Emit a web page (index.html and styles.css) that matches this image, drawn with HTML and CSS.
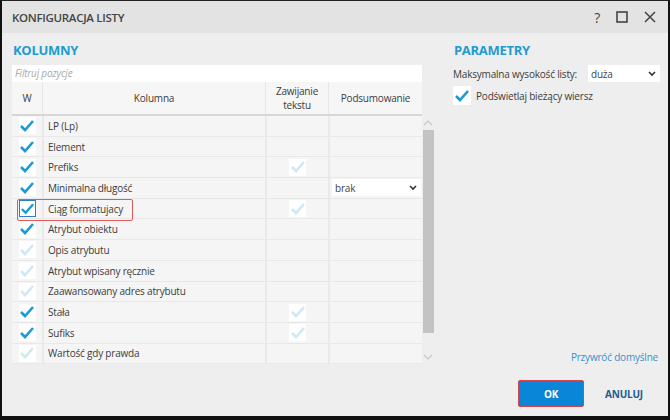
FILE: index.html
```html
<!DOCTYPE html>
<html lang="pl">
<head>
    <meta charset="UTF-8">
    <title>Konfiguracja listy</title>
    <link rel="stylesheet" href="styles.css">
</head>
<body>
    <div class="dialog">
        <div class="titlebar">
            <div class="title">KONFIGURACJA LISTY</div>
            <div class="win-icons">
                <span class="qmark">?</span>
                <svg width="12" height="12" viewBox="0 0 12 12"><rect x="1" y="1" width="10" height="10" fill="none" stroke="#444" stroke-width="1.6"/></svg>
                <svg width="12" height="12" viewBox="0 0 12 12"><path d="M1 1 L11 11 M11 1 L1 11" stroke="#444" stroke-width="1.5"/></svg>
            </div>
        </div>
        <div class="content">
            <div class="left">
                <div class="heading">KOLUMNY</div>
                <div class="filter">Filtruj pozycje</div>
                <div class="table">
                    <div class="thead">
                        <div class="th">W</div>
                        <div class="th">Kolumna</div>
                        <div class="th">Zawijanie<br>tekstu</div>
                        <div class="th">Podsumowanie</div>
                    </div>
                    <div class="tbody-wrap">
                        <div class="tbody" id="rows"></div>
                        <div class="scrollbar">
                            <svg class="arrow" width="10" height="6" viewBox="0 0 10 6"><path d="M1 5 L5 1 L9 5" fill="none" stroke="#c8c8c8" stroke-width="1.2"/></svg>
                            <div class="track"><div class="thumb"></div></div>
                            <svg class="arrow" width="10" height="6" viewBox="0 0 10 6"><path d="M1 1 L5 5 L9 1" fill="none" stroke="#c8c8c8" stroke-width="1.2"/></svg>
                        </div>
                    </div>
                </div>
            </div>
            <div class="right">
                <div class="heading">PARAMETRY</div>
                <div class="param">
                    <span class="label">Maksymalna wysokość listy:</span>
                    <div class="select wide">duża <svg width="8" height="6" viewBox="0 0 8 6"><path d="M1 1 L4 4 L7 1" fill="none" stroke="#333" stroke-width="1.6"/></svg></div>
                </div>
                <div class="param check-line">
                    <span class="box"><svg width="16" height="14" viewBox="0 0 16 14"><path d="M2 7 L6 11 L14 2" fill="none" stroke="#1b9ad6" stroke-width="2.6"/></svg></span>
                    <span>Podświetlaj bieżący wiersz</span>
                </div>
                <div class="spacer"></div>
                <div class="restore">Przywróć domyślne</div>
            </div>
        </div>
        <div class="footer">
            <div class="btn-ok">OK</div>
            <div class="btn-cancel">ANULUJ</div>
        </div>
    </div>

    <script>
        var data = [
            ["LP (Lp)", 1, null, ""],
            ["Element", 1, null, ""],
            ["Prefiks", 1, 0, ""],
            ["Minimalna długość", 1, null, "brak"],
            ["Ciąg formatujacy", 1, 0, ""],
            ["Atrybut obiektu", 1, null, ""],
            ["Opis atrybutu", 0, null, ""],
            ["Atrybut wpisany ręcznie", 0, null, ""],
            ["Zaawansowany adres atrybutu", 0, null, ""],
            ["Stała", 1, 0, ""],
            ["Sufiks", 1, 0, ""],
            ["Wartość gdy prawda", 0, null, ""]
        ];

        function tick(on) {
            var color = on ? "#1b9ad6" : "#cfe8f6";
            return '<span class="box"><svg width="16" height="14" viewBox="0 0 16 14"><path d="M2 7 L6 11 L14 2" fill="none" stroke="' + color + '" stroke-width="2.6"/></svg></span>';
        }

        var html = "";
        data.forEach(function (r, i) {
            var sel = i === 4 ? " selected" : "";
            html += '<div class="row' + sel + '">';
            html += '<div class="td c-w">' + tick(r[1]) + '</div>';
            html += '<div class="td c-name">' + r[0] + '</div>';
            html += '<div class="td c-wrap">' + (r[2] === null ? "" : tick(r[2])) + '</div>';
            html += '<div class="td c-sum">' + (r[3] ? '<div class="select">' + r[3] + ' <svg width="8" height="6" viewBox="0 0 8 6"><path d="M1 1 L4 4 L7 1" fill="none" stroke="#333" stroke-width="1.6"/></svg></div>' : "") + '</div>';
            html += '</div>';
        });
        document.getElementById('rows').innerHTML = html;
    </script>
</body>
</html>
```

FILE: styles.css
```css
* {
    box-sizing: border-box;
}
body {
    margin: 0;
    background: #111;
    font-family: "Open Sans", "Noto Sans", sans-serif;
    color: #3c3c3c;
    font-size: 10px;
    letter-spacing: -0.2px;
}
.dialog {
    width: 670px;
    height: 420px;
    border-top: 1px solid #222;
    border-left: 2px solid #111;
    border-right: 2px solid #111;
    border-bottom: 4px solid #111;
    background: #eeeeee;
    display: flex;
    flex-direction: column;
}
.titlebar {
    height: 32px;
    background: #e3e3e3;
    display: flex;
    align-items: center;
    justify-content: space-between;
    padding: 0 12px 0 10px;
}
.title {
    font-weight: 600;
    font-size: 11.5px;
    letter-spacing: -0.3px;
    color: #444;
}
.win-icons {
    display: flex;
    align-items: center;
    gap: 16px;
}
.qmark {
    font-size: 14px;
    color: #444;
}
.content {
    display: flex;
    padding: 8px 10px 0 10px;
    gap: 19px;
    flex: 1;
}
.heading {
    color: #1e9bd0;
    font-weight: 700;
    font-size: 13px;
    letter-spacing: -0.3px;
    height: 24px;
    padding-left: 1px;
}
.left {
    width: 422px;
    display: flex;
    flex-direction: column;
}
.filter {
    width: 410px;
    height: 17px;
    background: #fff;
    color: #aaa;
    font-style: italic;
    padding: 0 3px;
    line-height: 17px;
}
.table {
    width: 422px;
}
.thead {
    display: grid;
    grid-template-columns: 30px 223px 63px 94px;
    width: 410px;
    height: 34px;
    background: #f6f6f6;
    border-bottom: 2px solid #d6d6d6;
}
.th {
    display: flex;
    align-items: center;
    justify-content: center;
    text-align: center;
    line-height: 14px;
    border-left: 1px solid #e6e6e6;
}
.th:first-child {
    border-left: none;
}
.tbody-wrap {
    display: flex;
}
.tbody {
    width: 410px;
}
.row {
    display: grid;
    grid-template-columns: 30px 223px 63px 94px;
    height: 20.7px;
    background: #f5f5f5;
    border-bottom: 1px solid #e8e8e8;
    position: relative;
}
.td {
    display: flex;
    align-items: center;
    border-left: 2px solid #e9e9e9;
}
.td:first-child {
    border-left: none;
}
.c-w, .c-wrap {
    justify-content: center;
}
.c-name {
    padding-left: 4px;
}
.c-sum {
    padding: 0 1px 0 2px;
}
.box {
    width: 17px;
    height: 17px;
    background: #fff;
    display: flex;
    align-items: center;
    justify-content: center;
}
.row.selected {
    z-index: 2;
}
.row.selected .c-w .box {
    border: 1px solid #2a7fc5;
}
.row.selected::after {
    content: "";
    position: absolute;
    left: 5px;
    top: 0;
    width: 114px;
    height: 20px;
    border: 1.5px solid #e05a5a;
    border-radius: 2px;
}
.select {
    flex: 1;
    height: 17px;
    background: #fff;
    display: flex;
    align-items: center;
    justify-content: space-between;
    padding: 0 4px 0 3px;
    color: #444;
}
.scrollbar {
    width: 12px;
    display: flex;
    flex-direction: column;
    align-items: center;
}
.arrow {
    margin: 4px 0;
}
.track {
    flex: 1;
    width: 11px;
}
.thumb {
    width: 11px;
    height: 203px;
    background: #c3c3c3;
}
.right {
    flex: 1;
    display: flex;
    flex-direction: column;
}
.param {
    display: flex;
    align-items: center;
    gap: 11px;
    height: 17px;
    margin-bottom: 4px;
}
.label {
    white-space: nowrap;
    flex-shrink: 0;
}
.select.wide {
    flex: none;
    width: 72px;
}
.check-line {
    gap: 5px;
    height: 19px;
}
.check-line .box {
    width: 18px;
    height: 19px;
}
.spacer {
    flex: 1;
}
.restore {
    color: #3f8fc8;
    text-align: right;
    padding-right: 2px;
    margin-bottom: 4px;
}
.footer {
    height: 48px;
    display: flex;
    justify-content: flex-end;
    align-items: flex-start;
    padding: 12px 25px 0 0;
    gap: 21px;
}
.btn-ok {
    width: 66px;
    height: 27px;
    background: #0a86d8;
    border: 1.5px solid #d9434a;
    border-radius: 2px;
    color: #fff;
    font-weight: 700;
    display: flex;
    align-items: center;
    justify-content: center;
}
.btn-cancel {
    color: #245b8e;
    font-weight: 700;
    height: 27px;
    display: flex;
    align-items: center;
}
```
